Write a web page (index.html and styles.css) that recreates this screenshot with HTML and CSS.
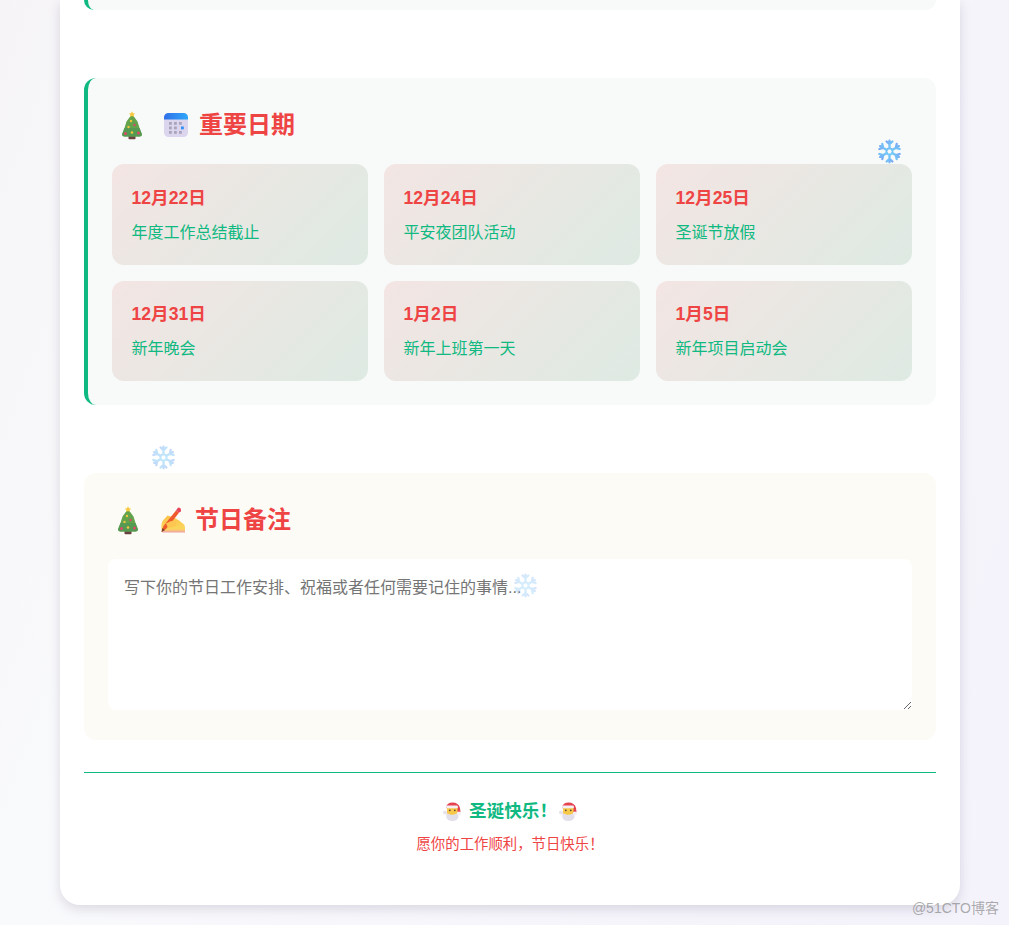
FILE: index.html
```html
<!DOCTYPE html>
<html lang="zh">

<head>
    <meta charset="utf-8">
    <title>圣诞工作计划</title>
    <link rel="stylesheet" href="styles.css">
</head>

<body>
    <svg class="Defs" width="0" height="0">
        <defs>
            <linearGradient id="flakeBlue" x1="0" y1="0" x2="1" y2="1">
                <stop offset="0" stop-color="#7aa8f5" />
                <stop offset="1" stop-color="#6fd3f7" />
            </linearGradient>
            <linearGradient id="calTop" x1="0" y1="0" x2="1" y2="0">
                <stop offset="0" stop-color="#2f6fe8" />
                <stop offset="1" stop-color="#2fa8fa" />
            </linearGradient>
            <linearGradient id="handFill" x1="0" y1="0" x2="0" y2="1">
                <stop offset="0" stop-color="#fcc24a" />
                <stop offset="0.8" stop-color="#fbd65c" />
                <stop offset="1" stop-color="#f0a0a8" />
            </linearGradient>
            <g id="arm">
                <path d="M12 9V1.6M12 5 9.200 2.400M12 5l2.800-2.600" />
            </g>
            <symbol id="flake" viewBox="0 0 24 24">
                <g fill="none" stroke="url(#flakeBlue)" stroke-width="2.200" stroke-linecap="round" stroke-linejoin="round">
                    <circle cx="12" cy="12" r="3" stroke-width="1.600" />
                    <use href="#arm" />
                    <use href="#arm" transform="rotate(60 12 12)" />
                    <use href="#arm" transform="rotate(120 12 12)" />
                    <use href="#arm" transform="rotate(180 12 12)" />
                    <use href="#arm" transform="rotate(240 12 12)" />
                    <use href="#arm" transform="rotate(300 12 12)" />
                </g>
            </symbol>
            <symbol id="tree" viewBox="0 0 20 29">
                <rect x="6.500" y="23.500" width="7" height="4.800" rx="0.800" fill="#6b4240" />
                <path d="M10 3 15.500 10.500 17.500 17 19.800 23Q20 25.500 17.500 25.500H2.500Q0 25.500 .2 23L2.500 17 4.500 10.500Z" fill="#62a34c" />
                <path d="M.2 23 2.500 17H17.500L19.800 23Q20 25.500 17.500 25.500H2.500Q0 25.500 .2 23Z" fill="#549a52" />
                <path d="M10 .3 11 2.300 13.100 2.600 11.600 4 12 6 10 5 8 6 8.400 4 6.900 2.600 9 2.300Z" fill="#f8c83c" />
                <circle cx="9" cy="10" r="1.200" fill="#f3c43f" />
                <circle cx="12.500" cy="14" r="1.200" fill="#e0486a" />
                <circle cx="6.500" cy="16" r="1.200" fill="#f3c43f" />
                <circle cx="3.500" cy="22.500" r="1.500" fill="#e0486a" />
                <circle cx="16.500" cy="22" r="1.500" fill="#e0486a" />
                <circle cx="10" cy="21.500" r="1.300" fill="#f3c43f" />
            </symbol>
            <symbol id="calendar" viewBox="0 0 24 24">
                <rect x="0" y="0" width="24" height="24" rx="4.500" fill="#dcd5ee" />
                <path d="M0 6.500V4.500A4.500 4.500 0 0 1 4.500 0h15A4.500 4.500 0 0 1 24 4.500V6.500Z" fill="url(#calTop)" />
                <g fill="#a9a4bd">
                    <rect x="5" y="9" width="2.800" height="2.800" />
                    <rect x="10" y="9" width="2.800" height="2.800" />
                    <rect x="15" y="9" width="2.800" height="2.800" />
                    <rect x="5" y="13.500" width="2.800" height="2.800" />
                    <rect x="10" y="13.500" width="2.800" height="2.800" />
                    <rect x="5" y="18" width="2.800" height="2.800" />
                    <rect x="10" y="18" width="2.800" height="2.800" />
                    <rect x="15" y="18" width="2.800" height="2.800" />
                </g>
                <rect x="17" y="13.500" width="2.800" height="2.800" fill="#2f8ef5" />
            </symbol>
            <symbol id="hand" viewBox="0 0 25 26">
                <path d="M2.500 25.500Q0 20 2.500 14L7.500 8.500 14 10.500 19 13.500 24 17.500Q25.500 20 25 25.500Z" fill="url(#handFill)" />
                <path d="M1.500 25 3.500 19 16 3.500 19 5.800 6.500 21.500Z" fill="#ef5a2c" />
                <path d="M16 3.500 17.500 1.200Q18.500 0 20 1T20.800 4.200L19 5.800Z" fill="#e8455a" />
                <path d="M1.500 25 2.400 21 5 23Z" fill="#7a3f2c" />
                <path d="M6 16.500 11 14 17 15 15.500 19.500 8 21Z" fill="#fdc650" />
            </symbol>
            <symbol id="santa" viewBox="0 0 18 19">
                <path d="M3 6Q3.500 .5 9.500 .5 15.500 .5 17 6L17.500 10H14.500Z" fill="#e5434f" />
                <circle cx="2" cy="10.500" r="1.900" fill="#e6e1ea" />
                <path d="M4 5H14.500V12H4Z" fill="#f8c94a" />
                <rect x="3" y="3.500" width="12" height="2.800" rx="1.400" fill="#f3eff5" />
                <path d="M3.500 10.500Q5 13 9 11.500 13 13 15 10.500L15.500 15Q14.500 19 9.500 19 4 19 3.300 15Z" fill="#e3dfea" />
                <path d="M5.500 11.500Q9 9.500 13 11.500 10 13.500 9.200 12.500 8 13.500 5.500 11.500Z" fill="#f6c945" />
                <circle cx="6.800" cy="8.300" r=".9" fill="#5c4033" />
                <circle cx="11.800" cy="8.300" r=".9" fill="#5c4033" />
                <circle cx="16" cy="11.500" r="1.900" fill="#f3eff5" />
            </symbol>
        </defs>
    </svg>

    <div class="Sheet">
        <div class="Panel PanelCut"></div>

        <section class="Panel PanelDates">
            <h2 class="PanelTitle">
                <svg class="Tree"><use href="#tree" /></svg>
                <svg class="Cal"><use href="#calendar" /></svg>
                重要日期
            </h2>
            <div class="DateGrid">
                <div class="DateCard">
                    <div class="DateDay">12月22日</div>
                    <div class="DateText">年度工作总结截止</div>
                </div>
                <div class="DateCard">
                    <div class="DateDay">12月24日</div>
                    <div class="DateText">平安夜团队活动</div>
                </div>
                <div class="DateCard">
                    <div class="DateDay">12月25日</div>
                    <div class="DateText">圣诞节放假</div>
                </div>
                <div class="DateCard">
                    <div class="DateDay">12月31日</div>
                    <div class="DateText">新年晚会</div>
                </div>
                <div class="DateCard">
                    <div class="DateDay">1月2日</div>
                    <div class="DateText">新年上班第一天</div>
                </div>
                <div class="DateCard">
                    <div class="DateDay">1月5日</div>
                    <div class="DateText">新年项目启动会</div>
                </div>
            </div>
        </section>

        <section class="Panel PanelNotes">
            <h2 class="PanelTitle">
                <svg class="Tree"><use href="#tree" /></svg>
                <svg class="Hand"><use href="#hand" /></svg>
                节日备注
            </h2>
            <textarea class="NoteBox" placeholder="写下你的节日工作安排、祝福或者任何需要记住的事情..."></textarea>
        </section>

        <footer class="Foot">
            <div class="FootTitle">
                <svg class="Santa SantaL"><use href="#santa" /></svg>
                圣诞快乐！
                <svg class="Santa SantaR"><use href="#santa" /></svg>
            </div>
            <div class="FootText">愿你的工作顺利，节日快乐！</div>
        </footer>
    </div>

    <svg class="Flake FlakeA"><use href="#flake" /></svg>
    <svg class="Flake FlakeB"><use href="#flake" /></svg>
    <svg class="Flake FlakeC"><use href="#flake" /></svg>
    <div class="Mark">@51CTO博客</div>
</body>

</html>
```
FILE: styles.css
```css
* {
    box-sizing: border-box;
}

html,
body {
    height: 925px;
    overflow: hidden;
}

body {
    position: relative;
    margin: 0;
    background: linear-gradient(110deg, #f6f4f7 0%, #f9fafc 25%, #f5f4fb 75%, #f4f3fb 100%);
    font-family: "Liberation Sans", "Noto Sans CJK SC", sans-serif;
    line-height: 1.6;
}

.Defs {
    position: absolute;
}

.Sheet {
    width: 900px;
    margin-left: 60px;
    padding: 0 24px 50px;
    background: white;
    border-radius: 0 0 20px 20px;
    box-shadow: 0 4px 12px rgba(60, 50, 90, 0.16);
}

.Panel {
    border-radius: 12px;
    margin-bottom: 68px;
}

.PanelCut {
    height: 10px;
    background: #f7faf9;
    border-left: 4px solid #10b981;
    border-radius: 0 0 12px 12px;
}

.PanelDates {
    padding: 24px;
    background: #f7faf9;
    border-left: 4px solid #10b981;
}

.PanelNotes {
    margin-bottom: 32px;
    padding: 24px;
    background: #fcfbf6;
}

.PanelTitle {
    display: flex;
    align-items: center;
    height: 46px;
    margin: 0 0 16px;
    color: #ef4444;
    font-size: 24px;
    font-weight: 700;
}

.Tree {
    flex: none;
    width: 20px;
    height: 29px;
    margin: 0 22px 0 10px;
}

.Cal {
    flex: none;
    width: 24px;
    height: 24px;
    margin-right: 11px;
}

.Hand {
    flex: none;
    width: 25px;
    height: 26px;
    margin-right: 10px;
}

.DateGrid {
    display: grid;
    grid-template-columns: repeat(3, 1fr);
    gap: 16px;
}

.DateCard {
    padding: 19.6px 19.5px 19.24px;
    background: linear-gradient(135deg, #f3e5e3, #deeae3);
    border-radius: 12px;
}

.DateDay {
    margin-bottom: 8px;
    color: #ef4444;
    font-size: 17.6px;
    font-weight: 700;
}

.DateText {
    color: #10b981;
    font-size: 16px;
}

.NoteBox {
    display: block;
    width: 100%;
    height: 151px;
    margin-bottom: 6px;
    padding: 16px;
    background: white;
    border: 0;
    border-radius: 8px;
    outline: 0;
    font-family: inherit;
    font-size: 16px;
    line-height: 1.6;
}

.NoteBox::placeholder {
    color: #757575;
}

.Foot {
    padding-top: 26px;
    border-top: 1px solid #10b981;
    text-align: center;
}

.FootTitle {
    display: flex;
    justify-content: center;
    align-items: center;
    margin-bottom: 8px;
    color: #10b981;
    font-size: 17.6px;
    line-height: 25.6px;
    font-weight: 700;
}

.Santa {
    width: 18px;
    height: 19px;
}

.SantaL {
    margin-right: 8px;
}

.SantaR {
    margin-left: 2px;
}

.FootText {
    color: #ef4444;
    font-size: 14.4px;
    line-height: 22.4px;
}

/* falling snow, sits on top of everything */
.Flake {
    position: absolute;
    width: 25px;
    height: 25px;
    pointer-events: none;
}

.FlakeA {
    left: 877px;
    top: 139px;
}

.FlakeB {
    left: 151px;
    top: 445px;
    opacity: 0.45;
}

.FlakeC {
    left: 513px;
    top: 573px;
    opacity: 0.3;
}

.Mark {
    position: absolute;
    right: 10px;
    top: 897px;
    color: rgba(120, 120, 120, 0.6);
    font-size: 14px;
}
```
